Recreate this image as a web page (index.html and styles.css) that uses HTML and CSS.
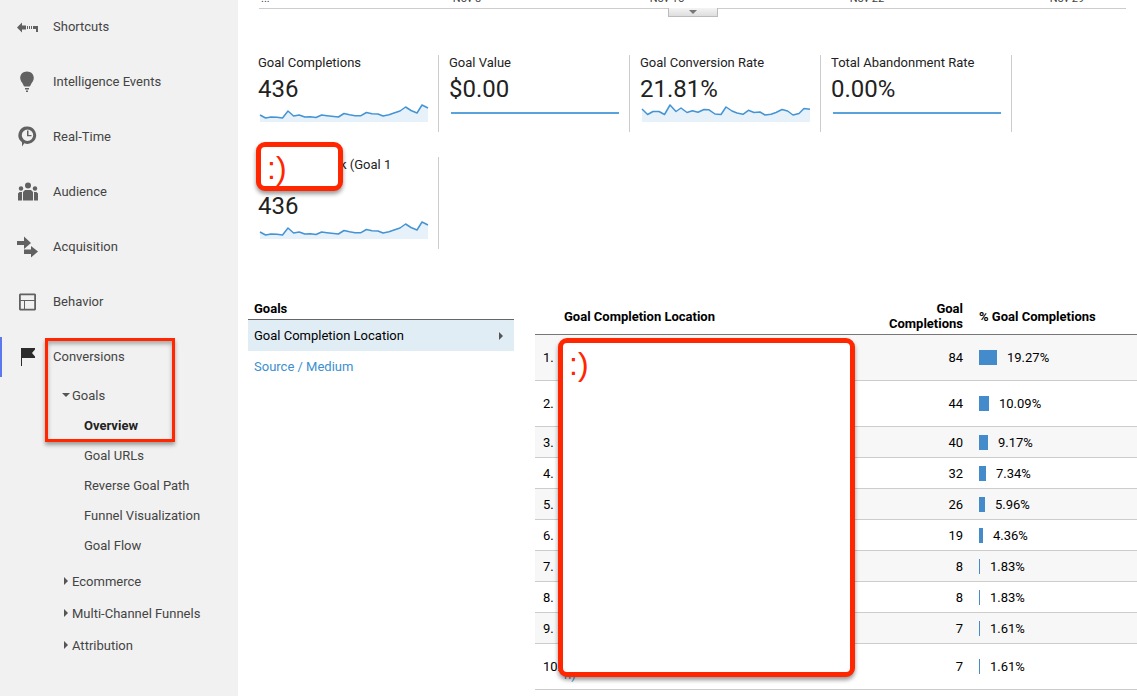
FILE: index.html
```html
<!DOCTYPE html>
<html lang="en">
<head>
<meta charset="utf-8">
<title>Goals Overview</title>
<link rel="stylesheet" href="styles.css">
</head>
<body>
<div class="app">
  <nav class="sidebar">
    <a class="nav-item" href="#"><svg class="icon" viewBox="0 0 22 22"><path d="M0 11.500l5-5v3h4v4H5v3zM10 10h1v3h-1zM12 10h1v3h-1zM14 10h1v3h-1zM16 10h5v6h-2v-3h-3z"/></svg>Shortcuts</a>
    <a class="nav-item" href="#"><svg class="icon" viewBox="0 0 22 22"><path d="M10 0.500c4 0 6.800 2.800 6.800 6.500 0 2.800-1.800 4.200-2.800 6.200-.5 1-.8 2.300-1.500 2.300h-5c-.7 0-1-1.300-1.500-2.300C5 11.200 3.200 9.800 3.200 7 3.200 3.300 6 .5 10 .5zM8 17h4v1.500H8zM9 19.500h2V21H9z"/></svg>Intelligence Events</a>
    <a class="nav-item" href="#"><svg class="icon" viewBox="0 0 22 22"><path fill-rule="evenodd" d="M10.500.5a8.700 8.700 0 1 1-3.200 16.800L5 20.500v-4.300A8.700 8.700 0 0 1 10.500.5zm0 3a5.700 5.700 0 1 0 0 11.400 5.700 5.700 0 0 0 0-11.400zM10 4.500h1.500V9h3v1.300H10z"/></svg>Real-Time</a>
    <a class="nav-item" href="#"><svg class="icon" viewBox="0 0 22 22"><circle cx="11" cy="4.500" r="3"/><circle cx="4" cy="7.500" r="2.200"/><circle cx="18" cy="7.500" r="2.200"/><path d="M6 19.500v-8.500l2-2h6l2 2v8.500zM1 19.500v-7l1.500-1.500H5v8.500zM17 19.500V11h2.500l1.500 1.500v7z"/></svg>Audience</a>
    <a class="nav-item" href="#"><svg class="icon" viewBox="0 0 22 22"><path d="M0 5h7V.5L14 7l-7 6V9H0zM7 13.500h7V10l7 5.500-7 6V18H7z"/></svg>Acquisition</a>
    <a class="nav-item" href="#"><svg class="icon" viewBox="0 0 22 22"><path fill-rule="evenodd" d="M3 2.500h15l1 1v15l-1 1H3l-1-1v-15zM3.800 4.300V9h13.400V4.300zM3.800 10v7.700H7V10zM8 10v7.700h9.200V10z"/></svg>Behavior</a>
    <div class="section">
      <a class="nav-item current" href="#"><svg class="icon" viewBox="0 0 22 22"><path d="M4 2h14v1.500L15 7l3 3.500V12H5v8H4z"/></svg>Conversions</a>
      <a class="group goals" href="#"><svg class="caret" viewBox="0 0 8 8"><path d="M0 2h8L4 6z"/></svg>Goals</a>
      <ul class="reports">
        <li><a class="selected" href="#">Overview</a></li>
        <li><a href="#">Goal URLs</a></li>
        <li><a href="#">Reverse Goal Path</a></li>
        <li><a href="#">Funnel Visualization</a></li>
        <li><a href="#">Goal Flow</a></li>
      </ul>
      <a class="group" href="#"><svg class="caret" viewBox="0 0 8 8"><path d="M2 0l4 4-4 4z"/></svg>Ecommerce</a>
      <a class="group" href="#"><svg class="caret" viewBox="0 0 8 8"><path d="M2 0l4 4-4 4z"/></svg>Multi-Channel Funnels</a>
      <a class="group" href="#"><svg class="caret" viewBox="0 0 8 8"><path d="M2 0l4 4-4 4z"/></svg>Attribution</a>
      <div class="highlight"></div>
    </div>
  </nav>

  <main class="main">
    <div class="timeline">
      <div class="axis"><span class="more">...</span><span>Nov 8</span><span>Nov 15</span><span>Nov 22</span><span>Nov 29</span></div>
      <div class="axis-line"></div>
      <button class="drawer" type="button" aria-label="Annotations"><svg class="caret" viewBox="0 0 8 8"><path d="M0 2h8L4 6z"/></svg></button>
    </div>

    <section class="metrics">
      <div class="metric">
        <div class="label">Goal Completions</div>
        <div class="value">436</div>
        <svg class="spark" viewBox="0 0 168 20"><path class="area" d="M0 12L5.600 15 11 14 17 14.200 22.500 15 28 8 33.600 13 39.200 12 44.800 14 50.400 13.700 56 14.500 61.600 12 67 12.700 78.400 14 84 10.500 89.600 11.800 95 12.700 101 12.700 106.400 9.500 112 10.700 118 11 123 13 129 11.700 134 10 140 8 145.600 4 151 7.500 157 10 162 2 168 5V19H0z"/><path class="line" d="M0 12L5.600 15 11 14 17 14.200 22.500 15 28 8 33.600 13 39.200 12 44.800 14 50.400 13.700 56 14.500 61.600 12 67 12.700 78.400 14 84 10.500 89.600 11.800 95 12.700 101 12.700 106.400 9.500 112 10.700 118 11 123 13 129 11.700 134 10 140 8 145.600 4 151 7.500 157 10 162 2 168 5"/></svg>
      </div>
      <div class="metric">
        <div class="label">Goal Value</div>
        <div class="value">$0.00</div>
        <svg class="spark" viewBox="0 0 168 20"><path class="line flat" d="M0 10H168"/></svg>
      </div>
      <div class="metric">
        <div class="label">Goal Conversion Rate</div>
        <div class="value">21.81%</div>
        <svg class="spark" viewBox="0 0 168 20"><path class="area" d="M0 6L5.600 11.500 11 8.500 17 8.500 22.500 11.500 28 2 34 8.500 39 5 45 9.500 50.400 7.800 56 9.300 62 6.500 67 6.800 73 11 79 11.500 84 4 90 8 95 10 101 11.300 106.400 7.300 112 9.500 118 9 123 12 129 11.300 134 9.500 140 6.500 145.600 8 151 12 157 10.500 162 5.500 168 6.300V19H0z"/><path class="line" d="M0 6L5.600 11.500 11 8.500 17 8.500 22.500 11.500 28 2 34 8.500 39 5 45 9.500 50.400 7.800 56 9.300 62 6.500 67 6.800 73 11 79 11.500 84 4 90 8 95 10 101 11.300 106.400 7.300 112 9.500 118 9 123 12 129 11.300 134 9.500 140 6.500 145.600 8 151 12 157 10.500 162 5.500 168 6.300"/></svg>
      </div>
      <div class="metric">
        <div class="label">Total Abandonment Rate</div>
        <div class="value">0.00%</div>
        <svg class="spark" viewBox="0 0 168 20"><path class="line flat" d="M0 10H168"/></svg>
      </div>
      <div class="metric">
        <div class="label two-line">k (Goal 1</div>
        <div class="value">436</div>
        <svg class="spark" viewBox="0 0 168 20"><path class="area" d="M0 12L5.600 15 11 14 17 14.200 22.500 15 28 8 33.600 13 39.200 12 44.800 14 50.400 13.700 56 14.500 61.600 12 67 12.700 78.400 14 84 10.500 89.600 11.800 95 12.700 101 12.700 106.400 9.500 112 10.700 118 11 123 13 129 11.700 134 10 140 8 145.600 4 151 7.500 157 10 162 2 168 5V19H0z"/><path class="line" d="M0 12L5.600 15 11 14 17 14.200 22.500 15 28 8 33.600 13 39.200 12 44.800 14 50.400 13.700 56 14.500 61.600 12 67 12.700 78.400 14 84 10.500 89.600 11.800 95 12.700 101 12.700 106.400 9.500 112 10.700 118 11 123 13 129 11.700 134 10 140 8 145.600 4 151 7.500 157 10 162 2 168 5"/></svg>
        <div class="cover cover-goal">:)</div>
      </div>
    </section>

    <section class="explorer">
      <div class="dimensions">
        <h2>Goals</h2>
        <a class="dimension active" href="#">Goal Completion Location<svg class="caret" viewBox="0 0 8 8"><path d="M2 0l4 4-4 4z"/></svg></a>
        <a class="dimension" href="#">Source / Medium</a>
      </div>
      <div class="report">
        <table>
          <thead>
            <tr><th class="index"></th><th class="location">Goal Completion Location</th><th class="count">Goal Completions</th><th class="share">% Goal Completions</th></tr>
          </thead>
          <tbody>
            <tr class="tall"><td class="index">1.</td><td></td><td class="count">84</td><td class="share"><div class="meter"><span class="bar" style="width:18px"></span>19.27%</div></td></tr>
            <tr class="tall"><td class="index">2.</td><td></td><td class="count">44</td><td class="share"><div class="meter"><span class="bar" style="width:10px"></span>10.09%</div></td></tr>
            <tr><td class="index">3.</td><td></td><td class="count">40</td><td class="share"><div class="meter"><span class="bar" style="width:9px"></span>9.17%</div></td></tr>
            <tr><td class="index">4.</td><td></td><td class="count">32</td><td class="share"><div class="meter"><span class="bar" style="width:7px"></span>7.34%</div></td></tr>
            <tr><td class="index">5.</td><td></td><td class="count">26</td><td class="share"><div class="meter"><span class="bar" style="width:6px"></span>5.96%</div></td></tr>
            <tr><td class="index">6.</td><td></td><td class="count">19</td><td class="share"><div class="meter"><span class="bar" style="width:4px"></span>4.36%</div></td></tr>
            <tr><td class="index">7.</td><td></td><td class="count">8</td><td class="share"><div class="meter"><span class="bar" style="width:1px"></span>1.83%</div></td></tr>
            <tr><td class="index">8.</td><td></td><td class="count">8</td><td class="share"><div class="meter"><span class="bar" style="width:1px"></span>1.83%</div></td></tr>
            <tr><td class="index">9.</td><td></td><td class="count">7</td><td class="share"><div class="meter"><span class="bar" style="width:1px"></span>1.61%</div></td></tr>
            <tr class="tall"><td class="index">10.</td><td class="location"><br><a href="#">n)</a></td><td class="count">7</td><td class="share"><div class="meter"><span class="bar" style="width:1px"></span>1.61%</div></td></tr>
          </tbody>
        </table>
        <div class="cover cover-locations">:)</div>
      </div>
    </section>
  </main>
</div>
</body>
</html>
```
FILE: styles.css
```css
* { box-sizing: border-box; }

body {
  margin: 0;
  background: #fff;
  color: #222;
  font: 13px/15px Roboto, "Liberation Sans", sans-serif;
}

a { color: inherit; text-decoration: none; }

.app { display: flex; min-height: 100vh; overflow: hidden; }

/* Sidebar */
.sidebar { flex: 0 0 238px; background: #f1f1f1; color: #444; }
.nav-item { display: flex; align-items: center; height: 55px; padding: 0 0 2px 17px; }
.icon { width: 22px; height: 22px; margin-right: 14px; fill: #616161; }
.section { position: relative; }
.current .icon { fill: #2b2b2b; }
.current::before {
  content: "";
  position: absolute;
  left: 0;
  top: 7px;
  width: 2px;
  height: 40px;
  background: #5c78ee;
}
.caret { width: 8px; height: 8px; fill: #555; }
.group { display: flex; align-items: center; gap: 2px; height: 32px; padding-left: 62px; }
.goals { height: 20px; }
.reports { list-style: none; margin: 6px 0 4px; padding: 0 0 0 84px; line-height: 30px; }
.reports a { display: block; }
.selected { color: #222; font-weight: 700; }
.highlight {
  position: absolute;
  left: 45px;
  top: 8px;
  width: 130px;
  height: 104px;
  border: 3px solid #ff2600;
  pointer-events: none;
  box-shadow: 0 3px 4px rgba(0, 0, 0, .35), inset 0 3px 4px rgba(0, 0, 0, .3);
}

/* Chart axis */
.main { flex: 1; min-width: 0; }
.timeline { display: flow-root; height: 55px; margin: 0 11px 0 21px; }
.axis {
  display: grid;
  grid-template-columns: 108fr 200fr 200fr 200fr 200fr;
  margin: -8px -41px 3px 0;
  color: #444;
  font-size: 11px;
  line-height: 13px;
  text-align: center;
}
.more { text-align: left; padding-left: 2px; }
.axis-line { height: 1px; background: #ccc; }
.drawer {
  display: block;
  width: 50px;
  height: 9px;
  margin: -1px auto 0;
  padding: 0;
  border: 1px solid #bbb;
  border-top: 0;
  background: linear-gradient(#f4f4f4, #dedede);
  line-height: 8px;
}
.drawer .caret { display: block; margin: 0 auto; fill: #777; }

/* Metric cards */
.metrics {
  display: grid;
  grid-template-columns: repeat(auto-fill, 181px);
  gap: 25px 10px;
  padding-left: 20px;
}
.metric { position: relative; padding-bottom: 9px; border-right: 1px solid #ccc; }
.two-line { min-height: 30px; padding-left: 82px; }
.value { margin-top: 5px; font-size: 24px; line-height: 28px; }
.spark { display: block; width: 168px; height: 20px; margin-left: 2px; overflow: visible; }
.area { fill: #e7f1fa; }
.line { fill: none; stroke: #4494d4; stroke-width: 1.500; stroke-linejoin: round; }
.flat { stroke: #58a3dc; stroke-width: 2; }

/* Covered regions */
.cover {
  position: absolute;
  border: 5px solid #ff2600;
  border-radius: 9px;
  background: #fff;
  color: #ff2600;
  font: 32px/36px "Liberation Sans", Arial, sans-serif;
  box-shadow: 0 3px 4px rgba(0, 0, 0, .4);
}
.cover-goal { left: -2px; top: -15px; width: 87px; height: 49px; padding: 3px 6px; }
.cover-locations { left: 23px; top: 41px; width: 297px; height: 339px; padding: 3px 6px; }

/* Explorer */
.explorer { display: flex; gap: 21px; margin: 48px 0 0 10px; color: #000; }
.dimensions { flex: 0 0 266px; }
.dimensions h2 {
  margin: 0;
  padding: 4px 6px 3px;
  border-bottom: 1px solid #666;
  font-size: 13px;
  line-height: 15px;
}
.dimension {
  display: flex;
  align-items: center;
  justify-content: space-between;
  height: 31px;
  padding: 0 9px 0 6px;
  color: #3d8fcf;
}
.active { background: #e1edf5; color: #000; }
.report { position: relative; flex: 1; min-width: 0; }
table { width: 100%; border-collapse: separate; border-spacing: 0; table-layout: fixed; }
th { padding: 4px 0 3px; border-bottom: 1px solid #777; text-align: left; }
td { height: 31px; padding: 0; border-bottom: 1px solid #ccc; }
.tall td { height: 46px; }
tbody tr:nth-child(odd) { background: #f7f7f7; }
.index { width: 29px; padding-left: 8px; }
.count { width: 84px; text-align: right; }
.share { width: 174px; padding-left: 16px; }
.location a { color: #3d8fcf; }
.meter { display: flex; align-items: center; gap: 10px; }
.bar { height: 15px; background: #448bcb; }
```
